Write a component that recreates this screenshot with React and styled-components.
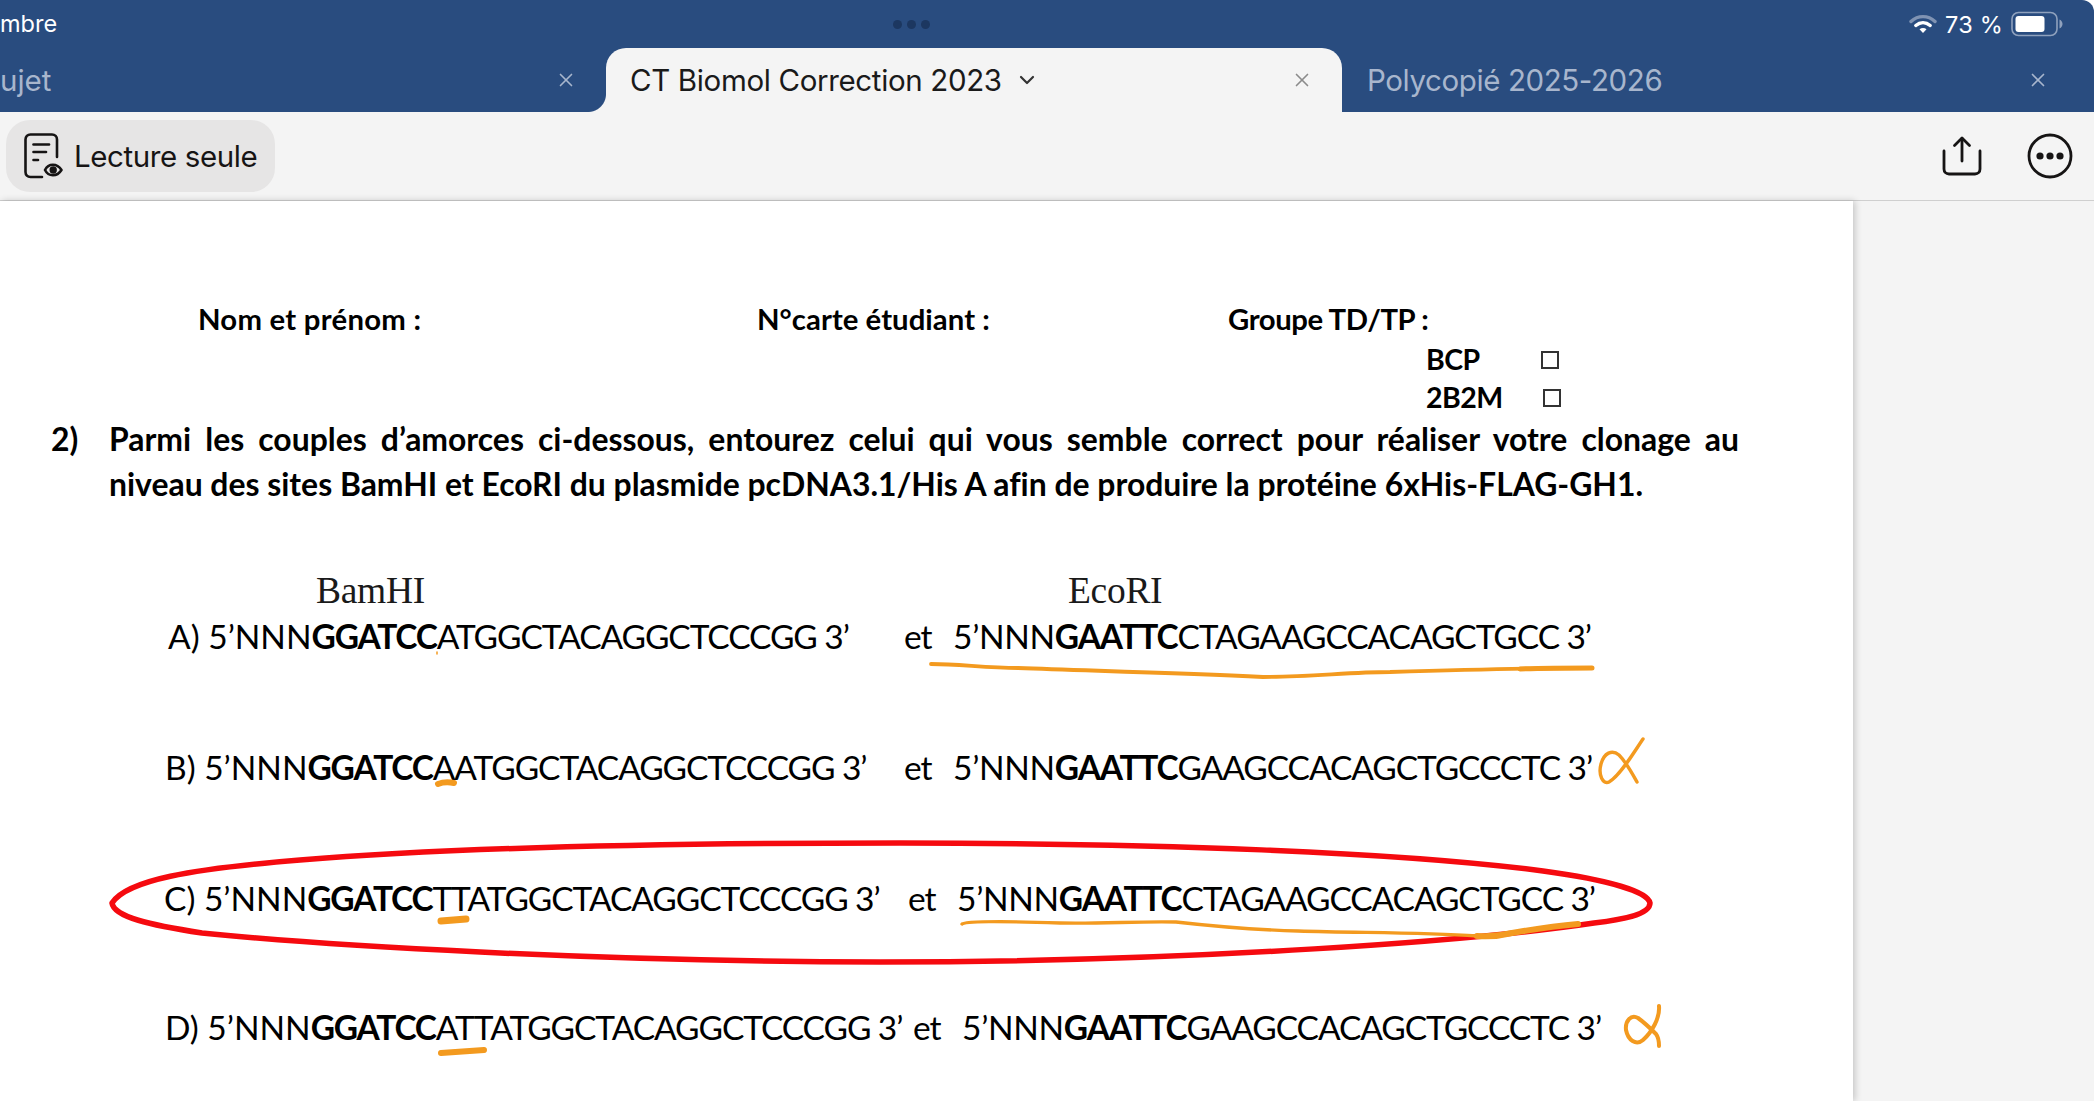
import React from 'react';
import styled, { createGlobalStyle } from 'styled-components';
import { X, ChevronDown } from 'lucide-react';

const NAVY = '#294c7f';
const PAPER = '#f4f4f4';
const PEN = '#f39a1f';

const GlobalStyle = createGlobalStyle`
  html, body { margin: 0; padding: 0; background: #fff; overflow: hidden; }
  * { box-sizing: border-box; }
`;

const Screen = styled.div`
  width: 2094px;
  height: 1101px;
  display: flex;
  flex-direction: column;
  overflow: hidden;
  font-family: Inter, "Liberation Sans", sans-serif;
`;

const StatusBar = styled.div`
  height: 48px;
  background: ${NAVY};
  border-top-right-radius: 12px;
  display: grid;
  grid-template-columns: 893px auto 1fr;
  align-items: center;
  color: #fff;
  font-size: 23.5px;
`;

const Clock = styled.span`
  padding-bottom: 1px;
`;

const Dots = styled.div`
  display: flex;
  gap: 5px;
  & span {
    width: 9px;
    height: 9px;
    border-radius: 50%;
    background: #1c3760;
  }
`;

const StatusRight = styled.div`
  display: flex;
  justify-content: flex-end;
  align-items: center;
  gap: 8px;
  padding-right: 31px;
  letter-spacing: 0.2px;
`;

const TabRow = styled.div`
  height: 64px;
  background: ${NAVY};
  display: grid;
  grid-template-columns: 606px 736px 752px;
`;

const Tab = styled.div`
  position: relative;
  display: flex;
  align-items: center;
  padding: 0 ${(p) => p.$right}px 0 ${(p) => p.$left}px;
  font-size: 29.5px;
  letter-spacing: ${(p) => p.$spacing || 0}px;
  white-space: nowrap;
  color: ${(p) => (p.$active ? '#1a1a1a' : '#a8b6cd')};
  background: ${(p) => (p.$active ? PAPER : NAVY)};
  border-radius: ${(p) => (p.$active ? '20px 20px 0 0' : '0')};
  ${(p) =>
    p.$active &&
    `
    &::before, &::after {
      content: '';
      position: absolute;
      bottom: 0;
      width: 18px;
      height: 18px;
    }
    &::before {
      left: -18px;
      background: radial-gradient(circle at 0 0, ${NAVY} 17.5px, ${PAPER} 18.5px);
    }
    &::after {
      right: -18px;
      background: radial-gradient(circle at 100% 0, ${NAVY} 17.5px, ${PAPER} 18.5px);
    }
  `}
`;

const TabTitle = styled.span`
  flex: ${(p) => (p.$grow ? 1 : 'none')};
  margin-left: ${(p) => p.$shift || 0}px;
`;

const Chevron = styled(ChevronDown)`
  margin-left: 13px;
  color: #333;
`;

const Spacer = styled.div`
  flex: 1;
`;

const CloseIcon = styled(X)`
  flex: none;
  color: ${(p) => (p.$active ? '#8b8b8b' : '#a8b6cd')};
`;

const Toolbar = styled.div`
  height: 89px;
  background: ${PAPER};
  border-bottom: 1px solid #cfcfcf;
  display: flex;
  align-items: center;
  justify-content: space-between;
  padding: 0 21px 0 6px;
`;

const ModeChip = styled.div`
  width: 269px;
  height: 72px;
  border-radius: 24px;
  background: #e6e5e5;
  display: flex;
  align-items: center;
  gap: 10px;
  padding-left: 18px;
  font-size: 29.5px;
  letter-spacing: -0.4px;
  color: #161414;
`;

const ToolActions = styled.div`
  display: flex;
  align-items: center;
  gap: 45px;
`;

const Body = styled.div`
  flex: 1;
  display: flex;
  min-height: 0;
  background: ${PAPER};
`;

const Sheet = styled.div`
  position: relative;
  width: 1853px;
  height: 100%;
  background: #fff;
  box-shadow: 2px 0 7px rgba(0, 0, 0, 0.2);
  display: flex;
  flex-direction: column;
  padding-top: 97px;
  color: #000;
  font-family: Lato, "Liberation Sans", sans-serif;
  font-variant-ligatures: none;
`;

const IdentityRow = styled.div`
  height: 40px;
  margin-bottom: 3px;
  padding-left: 198px;
  display: grid;
  grid-template-columns: 559px 471px auto;
  align-items: center;
  font-size: 29.3px;
  font-weight: 700;
  white-space: nowrap;
`;

const IdentityLabel = styled.span`
  letter-spacing: ${(p) => p.$spacing || 0}px;
`;

const GroupRow = styled.div`
  height: 38px;
  padding-left: 1426px;
  display: grid;
  grid-template-columns: ${(p) => p.$boxAt}px auto;
  align-items: center;
  font-size: 28.5px;
  font-weight: 700;
  letter-spacing: -0.5px;
  & > span:first-child { margin-top: -3px; }
`;

const CheckBox = styled.span`
  width: 18px;
  height: 18px;
  border: 2px solid #333;
`;

const Question = styled.div`
  display: grid;
  grid-template-columns: 58px 1630px;
  padding-left: 51px;
  font-size: 31.9px;
  font-weight: 700;
  line-height: 45px;
`;

const QuestionLine = styled.div`
  white-space: nowrap;
  ${(p) => p.$justify && `
    white-space: normal;
    text-align: justify;
    text-align-last: justify;
  `}
`;

const SiteRow = styled.div`
  height: 40px;
  margin-top: 62px;
  padding-left: 316px;
  display: grid;
  grid-template-columns: 752px auto;
  align-items: center;
  font-family: "Liberation Serif", serif;
  font-size: 37.5px;
  letter-spacing: -0.3px;
  color: #1a1a1a;
`;

const PrimerRow = styled.div`
  height: 40px;
  margin-top: ${(p) => p.$top}px;
  display: grid;
  grid-template-columns: ${(p) => p.$etX - p.$x}px ${(p) => p.$rightX - p.$etX}px auto;
  padding-left: ${(p) => p.$x}px;
  align-items: center;
  font-size: 33.5px;
  letter-spacing: -1.05px;
  white-space: nowrap;
  & b { font-weight: 700; letter-spacing: -1.2px; }
`;

const Lead = styled.span`
  letter-spacing: ${(p) => p.$spacing}px;
`;

const InkLayer = styled.svg`
  position: absolute;
  top: 0;
  left: 0;
  width: 2094px;
  height: 900px;
  pointer-events: none;
`;

const SideGutter = styled.div`
  flex: 1;
`;

const Wifi = () => (
  <svg width="28" height="22" viewBox="0 0 28 22" fill="none" strokeLinecap="round">
    <path d="M2 8.5C9 2 19 2 26 8.5" stroke="#7f93b3" strokeWidth="3.4" />
    <path d="M6.8 12.5C11.2 8.7 16.8 8.7 21.2 12.5" stroke="#fff" strokeWidth="3.4" />
    <path d="M10.5 16.2L14 20l3.5-3.8c-2-1.6-5-1.6-7 0z" fill="#fff" />
  </svg>
);

const Battery = () => (
  <svg width="52" height="26" viewBox="0 0 52 26" fill="none">
    <rect x="1" y="1.5" width="45" height="23" rx="6.5" stroke="#8fa1bd" strokeWidth="1.6" />
    <rect x="4.5" y="5" width="29" height="16" rx="3" fill="#fff" />
    <path d="M48.5 8.5c2 1 3 2.700 3 4.500s-1 3.500-3 4.500z" fill="#8fa1bd" />
  </svg>
);

const ReadOnlyIcon = () => (
  <svg width="40" height="46" viewBox="0 0 40 46" fill="none" stroke="#161414" strokeWidth="2.6" strokeLinecap="round" strokeLinejoin="round">
    <path d="M18 44H6.500C3.500 44 1.500 42 1.500 39V6.500C1.500 3.500 3.500 1.500 6.500 1.500H28C31 1.500 33 3.500 33 6.500V24" />
    <path d="M9.500 11.500H25" />
    <path d="M9.500 19H22" />
    <path d="M9.500 27H14" />
    <path d="M21 37c3.500-7 12-7 16.500 0-4.500 7-13 7-16.500 0z" />
    <circle cx="29.200" cy="37" r="2.400" fill="#161414" />
  </svg>
);

const ShareIcon = () => (
  <svg width="40" height="40" viewBox="0 0 40 40" fill="none" stroke="#161414" strokeWidth="2.8" strokeLinecap="round" strokeLinejoin="round">
    <path d="M20 25V2.500" />
    <path d="M12.500 9.500L20 2l7.500 7.500" />
    <path d="M2 15v18c0 3 2 5 5 5h26c3 0 5-2 5-5V15" />
  </svg>
);

const MoreIcon = () => (
  <svg width="46" height="46" viewBox="0 0 46 46" fill="none">
    <circle cx="23" cy="23" r="21" stroke="#161414" strokeWidth="2.8" />
    <circle cx="13" cy="23" r="3.600" fill="#161414" />
    <circle cx="23" cy="23" r="3.600" fill="#161414" />
    <circle cx="33" cy="23" r="3.600" fill="#161414" />
  </svg>
);

const Ink = () => (
  <InkLayer viewBox="0 201 2094 900" fill="none" strokeLinecap="round" strokeLinejoin="round">
    <path
      d="M112 903C127 880 190 869 300 860C470 846 700 843 900 843C1150 843 1400 852 1543 871C1610 880 1648 892 1650 903C1650 915 1620 920 1594 923C1480 940 1200 962 880 962C600 962 320 945 202 933C150 925 114 917 112 903Z"
      stroke="#f50a0f"
      strokeWidth="5.5"
    />
    <path d="M931 664C960 664 985 668 1018 668C1100 671 1180 673 1263 677C1310 677 1350 672 1390 672C1460 670 1530 668 1592 668" stroke={PEN} strokeWidth="3.800" />
    <path d="M1520 669C1545 668 1570 668 1592 668" stroke={PEN} strokeWidth="5" />
    <path d="M437 652L437 654" stroke={PEN} strokeWidth="1.500" />
    <path d="M438 784C443 782 449 782 454 783" stroke={PEN} strokeWidth="6" />
    <path d="M441 921L466 919" stroke={PEN} strokeWidth="7" />
    <path d="M441 1053L484 1050" stroke={PEN} strokeWidth="6" />
    <path d="M962 924C963 921 1000 921 1060 923C1100 924 1140 921 1176 922C1220 927 1260 930 1298 931C1360 933 1420 932 1477 936" stroke={PEN} strokeWidth="3.400" />
    <path d="M1477 936C1490 937 1500 936 1512 933C1535 929 1555 926 1578 924" stroke={PEN} strokeWidth="6" />
    <path d="M1637 782C1632 773 1626 762 1619 755C1612 749 1604 753 1601 764C1598 775 1603 785 1609 782C1620 776 1634 752 1643 739" stroke={PEN} strokeWidth="3.400" />
    <path d="M1659 1006C1660 1018 1652 1032 1643 1040C1636 1046 1628 1040 1626 1030C1625 1021 1631 1014 1638 1018C1645 1023 1652 1030 1656 1034C1659 1038 1659 1042 1659 1046" stroke={PEN} strokeWidth="4" />
  </InkLayer>
);

const App = () => (
  <Screen>
    <GlobalStyle />
    <StatusBar>
      <Clock>mbre</Clock>
      <Dots><span /><span /><span /></Dots>
      <StatusRight>
        <Wifi />
        <span>73 %</span>
        <Battery />
      </StatusRight>
    </StatusBar>
    <TabRow>
      <Tab $left={0} $right={29}>
        <TabTitle $grow>ujet</TabTitle>
        <CloseIcon size={22} strokeWidth={1.8} />
      </Tab>
      <Tab $active $left={24} $right={29} $spacing={-0.35}>
        <TabTitle>CT Biomol Correction 2023</TabTitle>
        <Chevron size={24} strokeWidth={2.2} />
        <Spacer />
        <CloseIcon $active size={22} strokeWidth={1.8} />
      </Tab>
      <Tab $left={25} $right={45} $spacing={-0.4}>
        <TabTitle $grow>Polycopié 2025-2026</TabTitle>
        <CloseIcon size={22} strokeWidth={1.8} />
      </Tab>
    </TabRow>
    <Toolbar>
      <ModeChip>
        <ReadOnlyIcon />
        <span>Lecture seule</span>
      </ModeChip>
      <ToolActions>
        <ShareIcon />
        <MoreIcon />
      </ToolActions>
    </Toolbar>
    <Body>
      <Sheet>
        <IdentityRow>
          <IdentityLabel $spacing={0.25}>Nom et prénom :</IdentityLabel>
          <IdentityLabel $spacing={0.05}>N°carte étudiant :</IdentityLabel>
          <IdentityLabel $spacing={-0.4}>Groupe TD/TP :</IdentityLabel>
        </IdentityRow>
        <GroupRow $boxAt={115}>
          <span>BCP</span>
          <CheckBox />
        </GroupRow>
        <GroupRow $boxAt={117}>
          <span>2B2M</span>
          <CheckBox />
        </GroupRow>
        <Question>
          <span>2)</span>
          <QuestionLine $justify>Parmi les couples d’amorces ci-dessous, entourez celui qui vous semble correct pour réaliser votre clonage au</QuestionLine>
          <span />
          <QuestionLine>niveau des sites BamHI et EcoRI du plasmide pcDNA3.1/His A afin de produire la protéine 6xHis-FLAG-GH1.</QuestionLine>
        </Question>
        <SiteRow>
          <span>BamHI</span>
          <span>EcoRI</span>
        </SiteRow>
        <PrimerRow $top={7} $x={168} $etX={904} $rightX={953}>
          <span><Lead $spacing={0}>A) 5’NNN</Lead><b>GGATCC</b>ATGGCTACAGGCTCCCGG 3’</span>
          <span>et</span>
          <span><Lead $spacing={-0.3}>5’NNN</Lead><b>GAATTC</b>CTAGAAGCCACAGCTGCC 3’</span>
        </PrimerRow>
        <PrimerRow $top={91} $x={165} $etX={904} $rightX={953}>
          <span><Lead $spacing={0}>B) 5’NNN</Lead><b>GGATCC</b>AATGGCTACAGGCTCCCGG 3’</span>
          <span>et</span>
          <span><Lead $spacing={-0.3}>5’NNN</Lead><b>GAATTC</b>GAAGCCACAGCTGCCCTC 3’</span>
        </PrimerRow>
        <PrimerRow $top={91} $x={164} $etX={908} $rightX={957}>
          <span><Lead $spacing={0}>C) 5’NNN</Lead><b>GGATCC</b>TTATGGCTACAGGCTCCCGG 3’</span>
          <span>et</span>
          <span><Lead $spacing={-0.3}>5’NNN</Lead><b>GAATTC</b>CTAGAAGCCACAGCTGCC 3’</span>
        </PrimerRow>
        <PrimerRow $top={89} $x={165} $etX={913} $rightX={962}>
          <span><Lead $spacing={0}>D) 5’NNN</Lead><b>GGATCC</b>ATTATGGCTACAGGCTCCCGG 3’</span>
          <span>et</span>
          <span><Lead $spacing={-0.3}>5’NNN</Lead><b>GAATTC</b>GAAGCCACAGCTGCCCTC 3’</span>
        </PrimerRow>
        <Ink />
      </Sheet>
      <SideGutter />
    </Body>
  </Screen>
);

export default App;
